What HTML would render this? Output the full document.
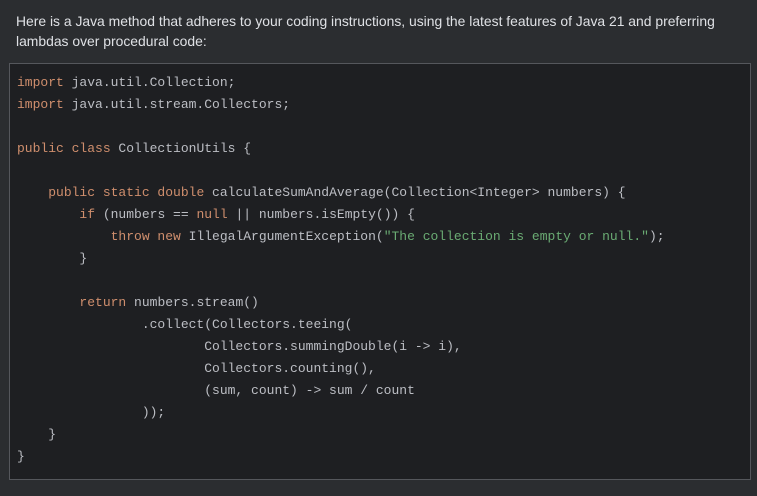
<!DOCTYPE html>
<html><head><style>
body{margin:0;width:757px;height:496px;background:#2b2d30;overflow:hidden;}
p{position:absolute;left:16px;top:11px;margin:0;width:720px;font-family:"Liberation Sans",sans-serif;font-size:13.9px;line-height:20px;color:#dfe1e5;}
.code{position:absolute;left:9px;top:63px;width:740px;height:415px;background:#1e1f22;border:1px solid #55575c;}
pre{margin:0;position:absolute;left:7px;top:8px;font-family:"Liberation Mono",monospace;font-size:13px;line-height:22px;color:#bcbec4;}
.k{color:#cf8e6d}.s{color:#6aab73}
</style></head><body>
<p>Here is a Java method that adheres to your coding instructions, using the latest features of Java 21 and preferring lambdas over procedural code:</p>
<div class="code"><pre><span class="k">import</span> java.util.Collection;
<span class="k">import</span> java.util.stream.Collectors;

<span class="k">public class</span> CollectionUtils {

    <span class="k">public static double</span> calculateSumAndAverage(Collection&lt;Integer&gt; numbers) {
        <span class="k">if</span> (numbers == <span class="k">null</span> || numbers.isEmpty()) {
            <span class="k">throw new</span> IllegalArgumentException(<span class="s">"The collection is empty or null."</span>);
        }

        <span class="k">return</span> numbers.stream()
                .collect(Collectors.teeing(
                        Collectors.summingDouble(i -&gt; i),
                        Collectors.counting(),
                        (sum, count) -&gt; sum / count
                ));
    }
}</pre></div>
</body></html>
